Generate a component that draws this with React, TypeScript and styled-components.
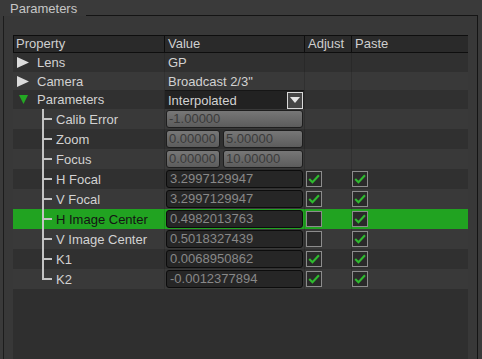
import React from "react";
import styled, { createGlobalStyle, css } from "styled-components";

const Global = createGlobalStyle`
  html, body { margin: 0; padding: 0; background: #3a3a3a; }
  body { font-family: "Liberation Sans", Arial, sans-serif; font-size: 13px; }
  * { box-sizing: border-box; }
`;

const Root = styled.div`
  width: 482px;
  height: 359px;
  display: flex;
  flex-direction: column;
  background: #3a3a3a;
  overflow: hidden;
`;

const TabStrip = styled.div`
  height: 16px;
  display: flex;
  padding-right: 4px;
`;

const TabLabel = styled.div`
  width: 86px;
  padding-left: 10px;
  color: #c6c6c6;
  font-size: 13px;
  line-height: 16px;
  margin-top: 1px;
`;

const TabRule = styled.div`
  flex: 1;
  border-bottom: 1px solid #141414;
`;

const Frame = styled.div`
  flex: 1;
  display: flex;
  margin: 0 4px 0 3px;
  padding: 19px 9px 0 9px;
  border-left: 1px solid #1c1c1c;
  border-right: 1px solid #141414;
  background: #383838;
`;

const Table = styled.div`
  flex: 1;
  display: flex;
  flex-direction: column;
  background: #2f2f2f;
`;

const cols = css`
  display: grid;
  grid-template-columns: 151px 140px 47px 117px;
`;

const HeaderRow = styled.div`
  ${cols};
  height: 18px;
  background: #2a2a2a;
  border-top: 1px solid #0e0e0e;
  border-bottom: 1px solid #0e0e0e;
`;

const HeaderCell = styled.div`
  padding-left: 3px;
  border-left: 1px solid #0e0e0e;
  color: #cfcfcf;
  line-height: 16px;
  &:first-child { padding-left: 2px; }
`;

const Row = styled.div<{ $alt: boolean; $selected?: boolean; $h: number }>`
  ${cols};
  height: ${(p) => p.$h}px;
  background: ${(p) => (p.$selected ? "#21a321" : p.$alt ? "#393939" : "#303030")};
  color: ${(p) => (p.$selected ? "#141414" : "#d2d2d2")};
`;

const LabelCell = styled.div<{ $child?: boolean; $last?: boolean }>`
  position: relative;
  display: flex;
  align-items: center;
  padding-left: ${(p) => (p.$child ? 43 : 4)}px;
  gap: 8px;
  white-space: nowrap;
  ${(p) =>
    p.$child &&
    css`
      &::before {
        content: "";
        position: absolute;
        left: 29px;
        top: 0;
        width: 2px;
        height: ${p.$last ? "50%" : "100%"};
        background: #c4c4c4;
      }
      &::after {
        content: "";
        position: absolute;
        left: 29px;
        top: calc(50% - 1px);
        width: 10px;
        height: 2px;
        background: #c4c4c4;
      }
    `}
`;

const ValueCell = styled.div<{ $plain?: boolean }>`
  display: flex;
  align-items: center;
  gap: 3px;
  padding: ${(p) => (p.$plain ? "0 0 0 3px" : "1px 1px 1px 1px")};
  border-left: 1px solid rgba(0, 0, 0, 0.12);
  white-space: nowrap;
`;

const CheckCell = styled.div<{ $inset: number }>`
  display: flex;
  align-items: center;
  padding-left: ${(p) => p.$inset}px;
  border-left: 1px solid rgba(0, 0, 0, 0.14);
`;

const Field = styled.div<{ $flex?: number; $w?: number }>`
  height: 18px;
  ${(p) => (p.$w ? `width: ${p.$w}px;` : `flex: ${p.$flex ?? 1};`)}
  border: 1px solid #0c0c0c;
  border-radius: 3px;
  background: #262626;
  color: #888888;
  padding-left: 3px;
  line-height: 16px;
  overflow: hidden;
`;

const GreyField = styled(Field)`
  background: linear-gradient(#777777, #5c5c5c);
  border-color: #1e1e1e;
  color: #3a3a3a;
  padding-left: 2px;
`;

const Select = styled.div`
  flex: 1;
  height: 19px;
  margin: -1px -1px -1px -1px;
  display: flex;
  align-items: center;
  justify-content: space-between;
  background: #222222;
  border-top: 1px solid #161616;
  color: #d2d2d2;
  padding: 0 1px 0 3px;
`;

const SelectButton = styled.div`
  width: 16px;
  height: 17px;
  border: 1px solid #d8d8d8;
  background: #454545;
  display: flex;
  align-items: center;
  justify-content: center;
`;

const Box = styled.div`
  width: 16px;
  height: 16px;
  border: 1px solid #8c8c8c;
  background: #2a2a2a;
  display: flex;
  align-items: center;
  justify-content: center;
`;

const Filler = styled.div`
  flex: 1;
`;

const RightArrow = () => (
  <svg width="12" height="11" viewBox="0 0 12 11">
    <polygon points="0,0 12,5.5 0,11" fill="#dcdcdc" />
  </svg>
);

const DownArrow = () => (
  <svg width="12" height="10" viewBox="0 0 12 10">
    <polygon points="2,0 11,0 6.5,9" fill="#23a823" />
  </svg>
);

const Check = ({ on }: { on: boolean }) => (
  <Box>
    {on && (
      <svg width="16" height="16" viewBox="0 0 16 16" style={{ marginLeft: 1 }}>
        <polyline points="1.5,8 5.5,12 13.5,3.5" fill="none" stroke="#2fbb2f" strokeWidth="2.6" />
      </svg>
    )}
  </Box>
);

type Child = {
  label: string;
  kind: "grey1" | "grey2" | "num";
  values: string[];
  adjust?: boolean;
  paste?: boolean;
  selected?: boolean;
};

const children: Child[] = [
  { label: "Calib Error", kind: "grey1", values: ["-1.00000"] },
  { label: "Zoom", kind: "grey2", values: ["0.00000", "5.00000"] },
  { label: "Focus", kind: "grey2", values: ["0.00000", "10.00000"] },
  { label: "H Focal", kind: "num", values: ["3.2997129947"], adjust: true, paste: true },
  { label: "V Focal", kind: "num", values: ["3.2997129947"], adjust: true, paste: true },
  { label: "H Image Center", kind: "num", values: ["0.4982013763"], adjust: false, paste: true, selected: true },
  { label: "V Image Center", kind: "num", values: ["0.5018327439"], adjust: false, paste: true },
  { label: "K1", kind: "num", values: ["0.0068950862"], adjust: true, paste: true },
  { label: "K2", kind: "num", values: ["-0.0012377894"], adjust: true, paste: true },
];

export default function App() {
  return (
    <Root>
      <Global />
      <TabStrip>
        <TabLabel>Parameters</TabLabel>
        <TabRule />
      </TabStrip>
      <Frame>
        <Table>
          <HeaderRow>
            <HeaderCell>Property</HeaderCell>
            <HeaderCell>Value</HeaderCell>
            <HeaderCell>Adjust</HeaderCell>
            <HeaderCell>Paste</HeaderCell>
          </HeaderRow>
          <Row $alt={false} $h={19}>
            <LabelCell>
              <RightArrow />
              Lens
            </LabelCell>
            <ValueCell $plain>GP</ValueCell>
            <CheckCell $inset={1} />
            <CheckCell $inset={0} />
          </Row>
          <Row $alt={true} $h={18}>
            <LabelCell>
              <RightArrow />
              Camera
            </LabelCell>
            <ValueCell $plain>Broadcast 2/3"</ValueCell>
            <CheckCell $inset={1} />
            <CheckCell $inset={0} />
          </Row>
          <Row $alt={false} $h={19}>
            <LabelCell>
              <DownArrow />
              Parameters
            </LabelCell>
            <ValueCell>
              <Select>
                Interpolated
                <SelectButton>
                  <svg width="10" height="6" viewBox="0 0 10 6">
                    <polygon points="0,0 10,0 5,6" fill="#e6e6e6" />
                  </svg>
                </SelectButton>
              </Select>
            </ValueCell>
            <CheckCell $inset={1} />
            <CheckCell $inset={0} />
          </Row>
          {children.map((c, i) => (
            <Row key={c.label} $alt={i % 2 === 0} $selected={c.selected} $h={20}>
              <LabelCell $child $last={i === children.length - 1}>
                {c.label}
              </LabelCell>
              <ValueCell>
                {c.kind === "grey1" && <GreyField>{c.values[0]}</GreyField>}
                {c.kind === "grey2" && (
                  <>
                    <GreyField $w={54}>{c.values[0]}</GreyField>
                    <GreyField>{c.values[1]}</GreyField>
                  </>
                )}
                {c.kind === "num" && <Field>{c.values[0]}</Field>}
              </ValueCell>
              <CheckCell $inset={1}>{c.adjust !== undefined && <Check on={c.adjust} />}</CheckCell>
              <CheckCell $inset={0}>{c.paste !== undefined && <Check on={c.paste} />}</CheckCell>
            </Row>
          ))}
          <Filler />
        </Table>
      </Frame>
    </Root>
  );
}
